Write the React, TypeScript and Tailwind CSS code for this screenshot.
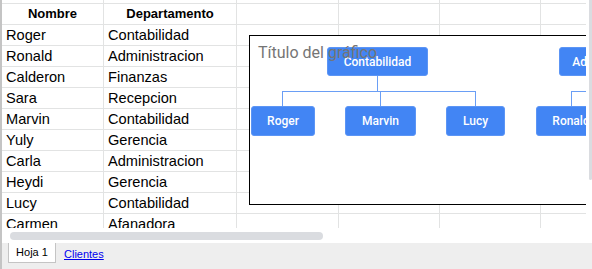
import React from 'react';

const ROWS: [string, string][] = [
  ['Roger', 'Contabilidad'],
  ['Ronald', 'Administracion'],
  ['Calderon', 'Finanzas'],
  ['Sara', 'Recepcion'],
  ['Marvin', 'Contabilidad'],
  ['Yuly', 'Gerencia'],
  ['Carla', 'Administracion'],
  ['Heydi', 'Gerencia'],
  ['Lucy', 'Contabilidad'],
  ['Carmen', 'Afanadora'],
];

// widths of the grid columns (line included)
const COLS = ['w-[102px]', 'w-[133px]', 'w-[102px]', 'w-[101px]', 'w-[101px]', 'w-[150px]'];

function Row({ cells, height, bold }: { cells: string[]; height: string; bold?: boolean }) {
  return (
    <div className={`flex shrink-0 border-b border-[#e2e3e3] ${height}`}>
      {COLS.map((w, i) => (
        <div
          key={i}
          className={`${w} shrink-0 border-r border-[#e2e3e3] flex items-end overflow-hidden whitespace-nowrap ${
            bold ? 'justify-center font-bold text-[13px] pb-[2px] leading-[16px]' : 'pl-[4px] text-[14.6px] pb-[1px] leading-[17px]'
          } ${i === 1 && !bold ? 'pl-[3px]' : ''}`}
        >
          {cells[i] ?? ''}
        </div>
      ))}
    </div>
  );
}

function Node({ label, className }: { label: string; className: string }) {
  return (
    <div
      className={`absolute flex items-center justify-center rounded-[3px] bg-[#4285f4] border border-[#5c95f5] text-white text-[12px] font-medium whitespace-nowrap ${className}`}
    >
      {label}
    </div>
  );
}

function OrgChart() {
  return (
    <div className="absolute left-[247px] top-[35px] w-[420px] h-[170px] bg-white border-l border-t border-b border-black font-['Roboto',sans-serif]">
      <div className="relative w-full h-full">
        <div className="absolute left-[8px] top-[9px] z-10 text-[16px] leading-none text-[#757575] whitespace-nowrap">
          Título del gráfico
        </div>

        <Node label="Contabilidad" className="left-[77px] top-[11px] w-[101px] h-[29px]" />
        <Node label="Administracion" className="left-[309px] top-[11px] w-[108px] h-[29px]" />

        {/* connectors */}
        <div className="absolute left-[127px] top-[40px] w-px h-[15px] bg-[#6a9ef5]" />
        <div className="absolute left-[32px] top-[55px] w-[194px] h-px bg-[#6a9ef5]" />
        <div className="absolute left-[32px] top-[55px] w-px h-[15px] bg-[#6a9ef5]" />
        <div className="absolute left-[130px] top-[55px] w-px h-[15px] bg-[#6a9ef5]" />
        <div className="absolute left-[225px] top-[55px] w-px h-[15px] bg-[#6a9ef5]" />
        <div className="absolute left-[321px] top-[55px] w-[80px] h-px bg-[#6a9ef5]" />
        <div className="absolute left-[321px] top-[55px] w-px h-[15px] bg-[#6a9ef5]" />

        <Node label="Roger" className="left-[1px] top-[70px] w-[64px] h-[30px]" />
        <Node label="Marvin" className="left-[95px] top-[70px] w-[71px] h-[30px]" />
        <Node label="Lucy" className="left-[196px] top-[70px] w-[59px] h-[30px]" />
        <Node label="Ronald" className="left-[286px] top-[70px] w-[70px] h-[30px]" />
      </div>
    </div>
  );
}

export default function App() {
  return (
    <div className="w-[592px] h-[269px] flex bg-white overflow-hidden text-black font-['Liberation_Sans',Arial,sans-serif]">
      <div className="w-[2px] shrink-0 bg-[#c4c4c4]" />
      <div className="flex-1 flex flex-col min-w-0">
        <div className="flex h-[228px] shrink-0">
          <div className="relative w-[584px] shrink-0 overflow-hidden flex flex-col">
            <Row cells={[]} height="h-[4px]" />
            <Row cells={['Nombre', 'Departamento']} height="h-[21px]" bold />
            {ROWS.map((r, i) => (
              <Row key={i} cells={r} height="h-[21px]" />
            ))}
            <OrgChart />
          </div>
          <div className="flex-1 flex justify-end">
            <div className="w-[3px] h-[180px] rounded-b-full bg-[#dadce0]" />
          </div>
        </div>

        {/* horizontal scrollbar */}
        <div className="h-[15px] shrink-0 pt-[4px] pl-[8px]">
          <div className="w-[313px] h-[8px] rounded-full bg-[#dadce0]" />
        </div>

        {/* sheet tabs */}
        <div className="flex-1 bg-[#eeeeee] flex items-start text-[11px]">
          <div className="ml-[6px] w-[48px] h-[20px] bg-white border-x border-b border-[#c4c4c4] flex items-center justify-center leading-[13px]">
            Hoja 1
          </div>
          <a href="#" className="ml-[8px] mt-[5px] leading-[13px] text-[#0000ee] underline">
            Clientes
          </a>
        </div>
      </div>
    </div>
  );
}
